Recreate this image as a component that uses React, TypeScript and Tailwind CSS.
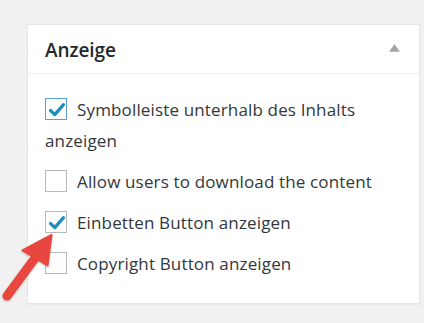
import React from "react";

const Check = () => (
  <svg viewBox="0 0 20 20" className="absolute left-[1px] top-[1px] h-[20px] w-[20px]">
    <path d="M3.5 10.5 L7.8 14.6 L16.5 4.6" fill="none" stroke="#1e8cbe" strokeWidth="3.2" strokeLinecap="round" strokeLinejoin="round" />
  </svg>
);

const Box = ({ checked, focus }: { checked?: boolean; focus?: boolean }) => (
  <span
    className={`relative inline-block h-[22px] w-[22px] align-[-4px] mr-[10px] bg-white border ${
      focus ? "border-[#5b9dd9]" : "border-[#b4b9be]"
    }`}
  >
    {checked && <Check />}
  </span>
);

const App = () => {
  const rows = [
    { label: "Symbolleiste unterhalb des Inhalts anzeigen", checked: true, focus: true },
    { label: "Allow users to download the content" },
    { label: "Einbetten Button anzeigen", checked: true },
    { label: "Copyright Button anzeigen" },
  ];
  return (
    <div className="relative h-[323px] w-[424px] bg-[#f1f1f1] pt-[24px] pl-[27px] font-['Open_Sans',sans-serif]">
      <div className="w-[393px] h-[280px] bg-white border border-[#e5e5e5] shadow-[0_1px_1px_rgba(0,0,0,0.04)]">
        <div className="flex h-[49px] items-center justify-between border-b border-[#eeeeee] pl-[17px] pr-[19px] pt-[3px]">
          <h2 className="text-[19px] font-semibold text-[#23282d] tracking-[-0.1px]">Anzeige</h2>
          <svg viewBox="0 0 12 8" className="h-[8px] w-[11px] mb-[6px]">
            <path d="M6 0 L12 8 L0 8 Z" fill="#a0a5aa" />
          </svg>
        </div>
        <div className="flex flex-col gap-[10px] pl-[17px] pr-[20px] pt-[20px] text-[17px] tracking-[0.15px] leading-[31px] text-[#32373c]">
          {rows.map((r) => (
            <label key={r.label} className="block">
              <Box checked={r.checked} focus={r.focus} />
              {r.label}
            </label>
          ))}
        </div>
      </div>
      <svg viewBox="0 0 424 323" className="pointer-events-none absolute left-0 top-0 h-[323px] w-[424px]">
        <defs>
          <filter id="sh" x="-20%" y="-20%" width="140%" height="140%">
            <feDropShadow dx="0" dy="1" stdDeviation="1" floodColor="#000" floodOpacity="0.25" />
          </filter>
        </defs>
        <g filter="url(#sh)">
          <line x1="7" y1="296" x2="38" y2="254" stroke="#e8463f" strokeWidth="9" strokeLinecap="round" />
          <path d="M51.5 235 L22.5 250.5 L47.5 265.5 Z" fill="#e8463f" stroke="#e8463f" strokeWidth="2" strokeLinejoin="round" />
        </g>
      </svg>
    </div>
  );
};

export default App;
